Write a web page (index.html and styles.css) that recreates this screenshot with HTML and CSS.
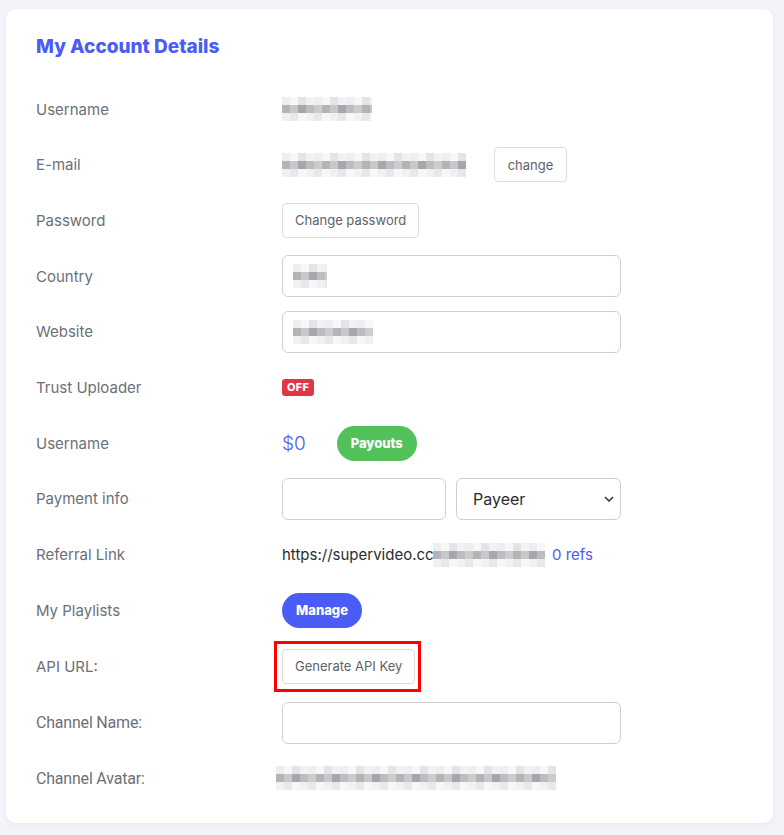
FILE: index.html
```html
<!DOCTYPE html>
<html lang="en">
<head>
  <meta charset="UTF-8" />
  <meta name="viewport" content="width=device-width, initial-scale=1.0"/>
  <title>My Account Details</title>
  <link rel="stylesheet" href="styles.css">
</head>
<body>

  <div class="card">
    <h2 class="title">My Account Details</h2>

    <div class="rows">
      <div class="row">
        <div class="label">Username</div>
        <div class="value"><span class="blur blur-user"></span></div>
      </div>

      <div class="row">
        <div class="label">E-mail</div>
        <div class="value">
          <span class="blur blur-mail"></span>
          <button class="btn-light btn-change">change</button>
        </div>
      </div>

      <div class="row">
        <div class="label">Password</div>
        <div class="value"><button class="btn-light">Change password</button></div>
      </div>

      <div class="row">
        <div class="label">Country</div>
        <div class="value">
          <div class="field"><span class="blur blur-country"></span></div>
        </div>
      </div>

      <div class="row">
        <div class="label">Website</div>
        <div class="value">
          <div class="field"><span class="blur blur-site"></span></div>
        </div>
      </div>

      <div class="row">
        <div class="label">Trust Uploader</div>
        <div class="value"><span class="badge-off">OFF</span></div>
      </div>

      <div class="row">
        <div class="label">Username</div>
        <div class="value">
          <span class="balance">$0</span>
          <button class="pill pill-green">Payouts</button>
        </div>
      </div>

      <div class="row">
        <div class="label">Payment info</div>
        <div class="value pay">
          <input class="field field-half" type="text">
          <select class="field field-half select">
            <option>Payeer</option>
          </select>
        </div>
      </div>

      <div class="row">
        <div class="label">Referral Link</div>
        <div class="value">
          <span class="ref">https://supervideo.cc/</span><span class="blur blur-ref"></span>
          <a class="refs" href="#">0 refs</a>
        </div>
      </div>

      <div class="row">
        <div class="label">My Playlists</div>
        <div class="value"><button class="pill pill-blue">Manage</button></div>
      </div>

      <div class="row">
        <div class="label">API URL:</div>
        <div class="value">
          <div class="marked"><button class="btn-light">Generate API Key</button></div>
        </div>
      </div>

      <div class="row">
        <div class="label label-alt">Channel Name:</div>
        <div class="value"><input class="field" type="text"></div>
      </div>

      <div class="row">
        <div class="label label-alt">Channel Avatar:</div>
        <div class="value"><span class="blur blur-avatar"></span></div>
      </div>
    </div>
  </div>

</body>
</html>
```

FILE: styles.css
```css
:root {
  --primary: #4b5cf6;
  --green: #52c15a;
  --red: #e03545;
  --label: #6c7078;
  --text: #2f3136;
  --border: #cfd0d4;
  --page: #f3f4f8;
}

body {
  margin: 0;
  padding: 9px 11px 13px 6px;
  font-family: Inter, 'Noto Sans', sans-serif;
  background-color: var(--page);
  color: var(--text);
}

.card {
  background: #ffffff;
  border-radius: 10px;
  padding: 26px 30px 24px 30px;
  box-shadow: 0 2px 6px rgba(40, 50, 90, 0.05);
}

.title {
  margin: 0 0 29px 0;
  font-size: 19px;
  line-height: 24px;
  font-weight: 800;
  color: var(--primary);
}

.rows {
  display: flex;
  flex-direction: column;
  gap: 13.7px;
}

.row {
  display: grid;
  grid-template-columns: 246px 1fr;
  align-items: center;
  min-height: 42px;
}

.label {
  font-size: 15px;
  color: var(--label);
}

.label-alt {
  font-family: Roboto, 'Liberation Sans', sans-serif;
  font-size: 16px;
  letter-spacing: -0.2px;
}

.value {
  display: flex;
  align-items: center;
}

/* pixelated placeholders */
.blur {
  display: inline-block;
  height: 24px;
  background:
    repeating-linear-gradient(90deg, #eeeef0 0 8px, #f7f7f8 8px 16px, #e4e4e7 16px 24px, #f2f2f3 24px 32px) 0 0 / 100% 8px no-repeat,
    repeating-linear-gradient(90deg, #b4b4b7 0 8px, #c7c8cb 8px 16px, #a6a7aa 16px 24px, #bcbdc0 24px 32px, #cbccce 32px 40px) 0 8px / 100% 8px no-repeat,
    repeating-linear-gradient(90deg, #f1f1f2 0 8px, #e8e8ea 8px 16px, #f7f7f8 16px 24px) 0 16px / 100% 8px no-repeat;
}

.blur-user { width: 90px; }
.blur-mail { width: 184px; margin-right: 28px; }
.blur-country { width: 34px; margin-left: 10px; }
.blur-site { width: 80px; margin-left: 10px; }
.blur-ref { width: 112px; margin-left: -6px; margin-right: 7px; }
.blur-avatar { width: 280px; margin-left: -6px; }

.btn-light {
  font-family: inherit;
  font-size: 13px;
  color: #5f6268;
  background: #ffffff;
  border: 1px solid #dcdde3;
  border-radius: 4px;
  height: 35px;
  padding: 0 12px;
  cursor: pointer;
}

.btn-change {
  width: 73px;
}

.field {
  box-sizing: border-box;
  width: 339px;
  height: 42px;
  border: 1px solid var(--border);
  border-radius: 6px;
  background: #ffffff;
  display: flex;
  align-items: center;
  font-family: inherit;
  font-size: 16px;
  margin: 0;
}

.pay {
  gap: 10px;
}

.field-half {
  width: 164px;
}

.field-half.select {
  width: 165px;
  padding: 0 6px 0 16px;
  color: #2b2d31;
  appearance: none;
  background:
    url("data:image/svg+xml,%3Csvg xmlns='http://www.w3.org/2000/svg' width='10' height='6'%3E%3Cpath d='M1 1l4 4 4-4' fill='none' stroke='%23333' stroke-width='1.5'/%3E%3C/svg%3E") right 6px center no-repeat,
    #ffffff;
}

.badge-off {
  background: var(--red);
  color: #ffffff;
  font-size: 11px;
  font-weight: 800;
  line-height: 17px;
  padding: 0 5px;
  border-radius: 3px;
  letter-spacing: 0.3px;
}

.balance {
  font-size: 19px;
  font-weight: 300;
  color: var(--primary);
  margin-right: 31px;
}

.pill {
  font-family: inherit;
  border: none;
  color: #ffffff;
  font-size: 13px;
  font-weight: 800;
  height: 35px;
  border-radius: 18px;
  padding: 0 13px;
  cursor: pointer;
}

.pill-green { background: var(--green); width: 80px; }
.pill-blue { background: var(--primary); width: 80px; }

.ref {
  font-size: 15px;
  color: #2b2d31;
}

.refs {
  font-size: 15px;
  color: var(--primary);
  text-decoration: none;
}

.marked {
  border: 3px solid #ff0000;
  padding: 5px 3px 5px 5px;
  margin: -4px 0 -4px -8px;
  display: flex;
}
```
